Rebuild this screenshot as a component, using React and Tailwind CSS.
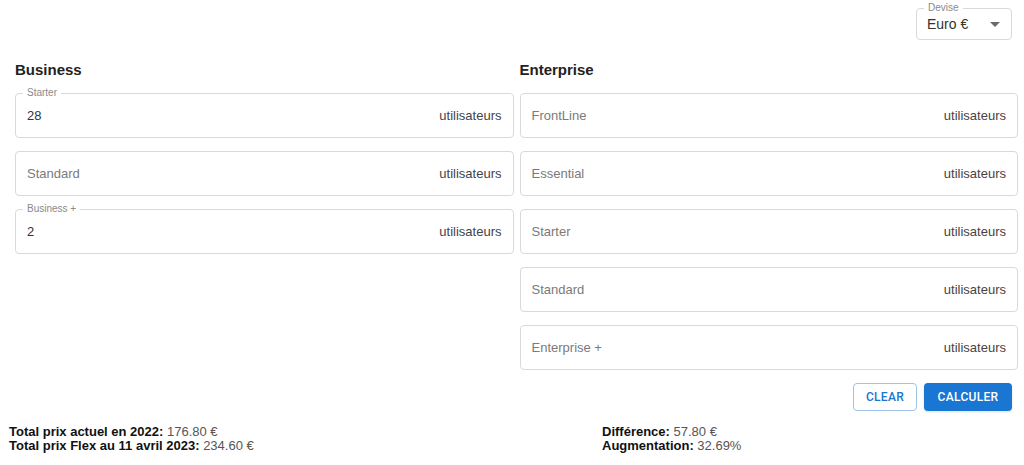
import { useState } from "react";

const business = [
  { name: "Starter", value: "28" },
  { name: "Standard", value: "" },
  { name: "Business +", value: "2" },
];

const enterprise = [
  { name: "FrontLine", value: "" },
  { name: "Essential", value: "" },
  { name: "Starter", value: "" },
  { name: "Standard", value: "" },
  { name: "Enterprise +", value: "" },
];

const Field = ({ name, initial }) => {
  const [value, setValue] = useState(initial);
  const filled = value !== "";

  return (
    <div className="relative h-[45px] rounded-[4px] border border-[#d9d9d9] flex items-center px-[11px]">
      {filled && (
        <span className="absolute -top-[7px] left-[7px] bg-white px-[4px] text-[10px] leading-[12px] text-[#8a8a8a]">
          {name}
        </span>
      )}
      <input
        value={value}
        onChange={(e) => setValue(e.target.value)}
        placeholder={name}
        className="flex-1 min-w-0 bg-transparent text-[13px] text-[#333] placeholder:text-[#7a7a7a] focus:outline-none"
      />
      <span className="text-[13px] text-[#444]">utilisateurs</span>
    </div>
  );
};

const App = () => {
  return (
    <div
      className="w-[1024px] h-[465px] bg-white overflow-hidden"
      style={{ fontFamily: "'Liberation Sans', Arial, sans-serif" }}
    >
      {/* Devise */}
      <div className="flex justify-end pt-[8px] pr-[12px]">
        <div className="relative w-[96px] h-[32px] rounded-[4px] border border-[#d9d9d9] flex items-center pl-[10px] pr-[10px]">
          <span className="absolute -top-[7px] left-[7px] bg-white px-[4px] text-[10px] leading-[12px] text-[#8a8a8a]">
            Devise
          </span>
          <span className="flex-1 text-[14px] text-[#333]">Euro €</span>
          <svg width="10" height="5" viewBox="0 0 10 5" className="mr-[1px]">
            <path d="M0 0 L5 5 L10 0 Z" fill="#6b6b6b" />
          </svg>
        </div>
      </div>

      {/* Columns */}
      <div className="flex gap-[6px] ml-[15px] mr-[6px] mt-[20px]">
        <div className="flex-1">
          <h2 className="text-[15px] font-bold text-[#222] leading-[20px] mb-[13px]">Business</h2>
          <div className="flex flex-col gap-[13px]">
            {business.map((f) => (
              <Field key={f.name} name={f.name} initial={f.value} />
            ))}
          </div>
        </div>
        <div className="flex-1">
          <h2 className="text-[15px] font-bold text-[#222] leading-[20px] mb-[13px]">Enterprise</h2>
          <div className="flex flex-col gap-[13px]">
            {enterprise.map((f) => (
              <Field key={f.name} name={f.name} initial={f.value} />
            ))}
          </div>
        </div>
      </div>

      {/* Buttons */}
      <div className="flex justify-end gap-[7px] mt-[13px] mr-[12px]">
        <button
          className="h-[28px] w-[64px] rounded-[4px] border border-[#9cc3ea] text-[#1976d2] text-[12px] font-medium tracking-[0.3px]"
          style={{ fontFamily: "Roboto, 'Liberation Sans', sans-serif" }}
        >
          CLEAR
        </button>
        <button
          className="h-[28px] w-[88px] rounded-[4px] bg-[#1976d2] text-white text-[12px] font-medium tracking-[0.3px] shadow-sm"
          style={{ fontFamily: "Roboto, 'Liberation Sans', sans-serif" }}
        >
          CALCULER
        </button>
      </div>

      {/* Totals */}
      <div className="flex mt-[14px] pl-[9px] text-[13px] leading-[14px] text-[#555]">
        <div className="w-[593px]">
          <p>
            <b className="text-[#111]">Total prix actuel en 2022:</b> 176.80 €
          </p>
          <p>
            <b className="text-[#111]">Total prix Flex au 11 avril 2023:</b> 234.60 €
          </p>
        </div>
        <div>
          <p>
            <b className="text-[#111]">Différence:</b> 57.80 €
          </p>
          <p>
            <b className="text-[#111]">Augmentation:</b> 32.69%
          </p>
        </div>
      </div>
    </div>
  );
};

export default App;
